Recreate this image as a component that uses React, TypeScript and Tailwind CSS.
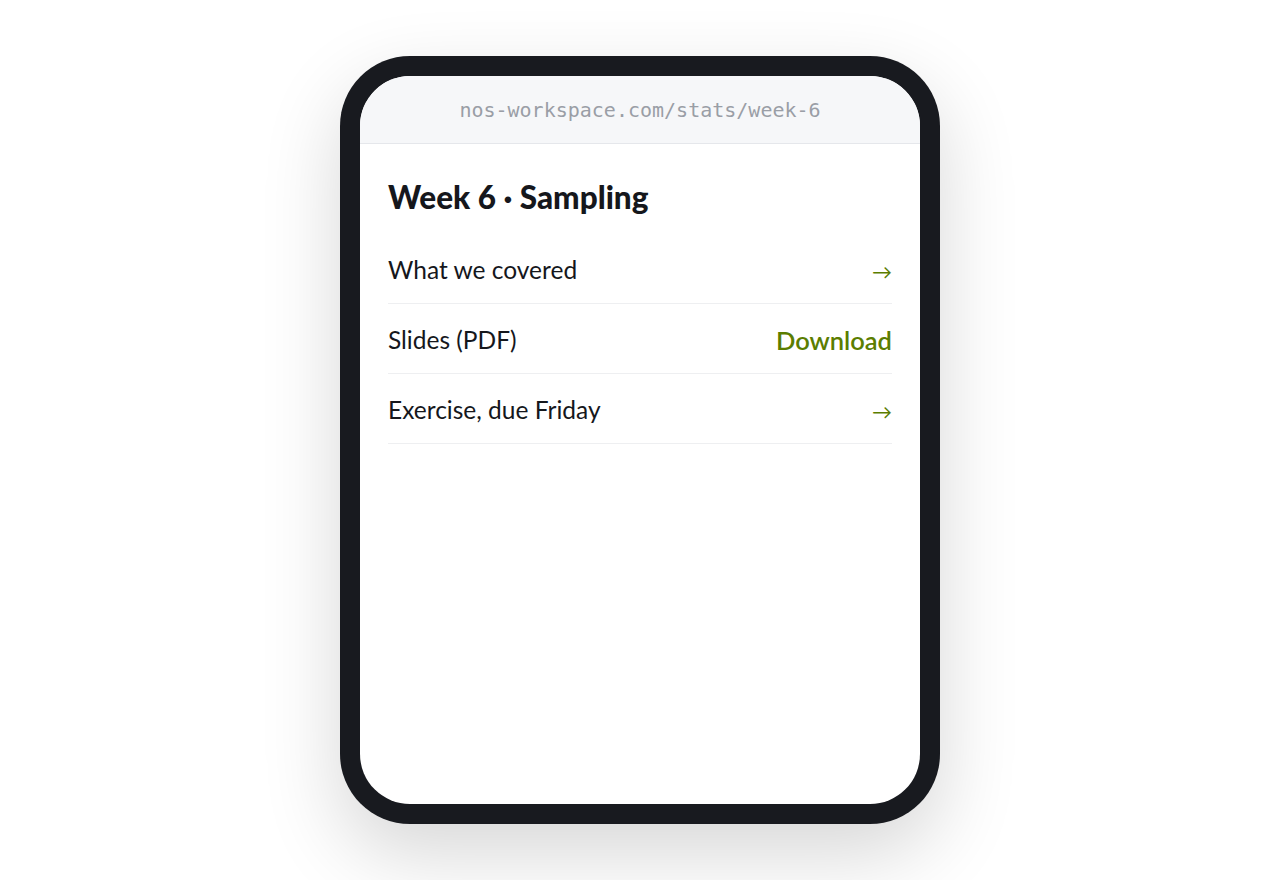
export default function App() {
  const rows = [
    { label: 'What we covered', action: '→', kind: 'arrow' },
    { label: 'Slides (PDF)', action: 'Download', kind: 'link' },
    { label: 'Exercise, due Friday', action: '→', kind: 'arrow' },
  ]

  return (
    <div className="min-h-screen w-full bg-white flex items-start justify-center pt-[56px]">
      <div className="w-[600px] h-[768px] rounded-[70px] bg-[#181a1f] p-[20px] shadow-[0_30px_80px_rgba(0,0,0,0.16)]">
        <div className="h-full w-full rounded-[50px] bg-white overflow-hidden flex flex-col">
          {/* Address bar */}
          <div className="h-[68px] shrink-0 bg-[#f6f7f9] border-b border-[#e5e7eb] flex items-center justify-center">
            <span className="font-['DejaVu_Sans_Mono',monospace] text-[20px] text-[#9a9ea6]">
              nos-workspace.com/stats/week-6
            </span>
          </div>

          {/* Page */}
          <div className="px-[28px] pt-[33px] font-['Lato',sans-serif]">
            <h1 className="text-[31.5px] leading-[40px] font-black text-[#15171c]">
              Week 6 · Sampling
            </h1>
            <ul className="mt-[17px]">
              {rows.map((row) => (
                <li
                  key={row.label}
                  className="h-[70px] pt-[4px] flex items-center justify-between border-b border-[#eeeff1]"
                >
                  <span className="text-[24.5px] text-[#15171c]">{row.label}</span>
                  {row.kind === 'link' ? (
                    <span className="text-[25.5px] font-semibold text-[#5b7d00]">{row.action}</span>
                  ) : (
                    <span className="text-[20px] text-[#5b7d00]">{row.action}</span>
                  )}
                </li>
              ))}
            </ul>
          </div>
        </div>
      </div>
    </div>
  )
}
